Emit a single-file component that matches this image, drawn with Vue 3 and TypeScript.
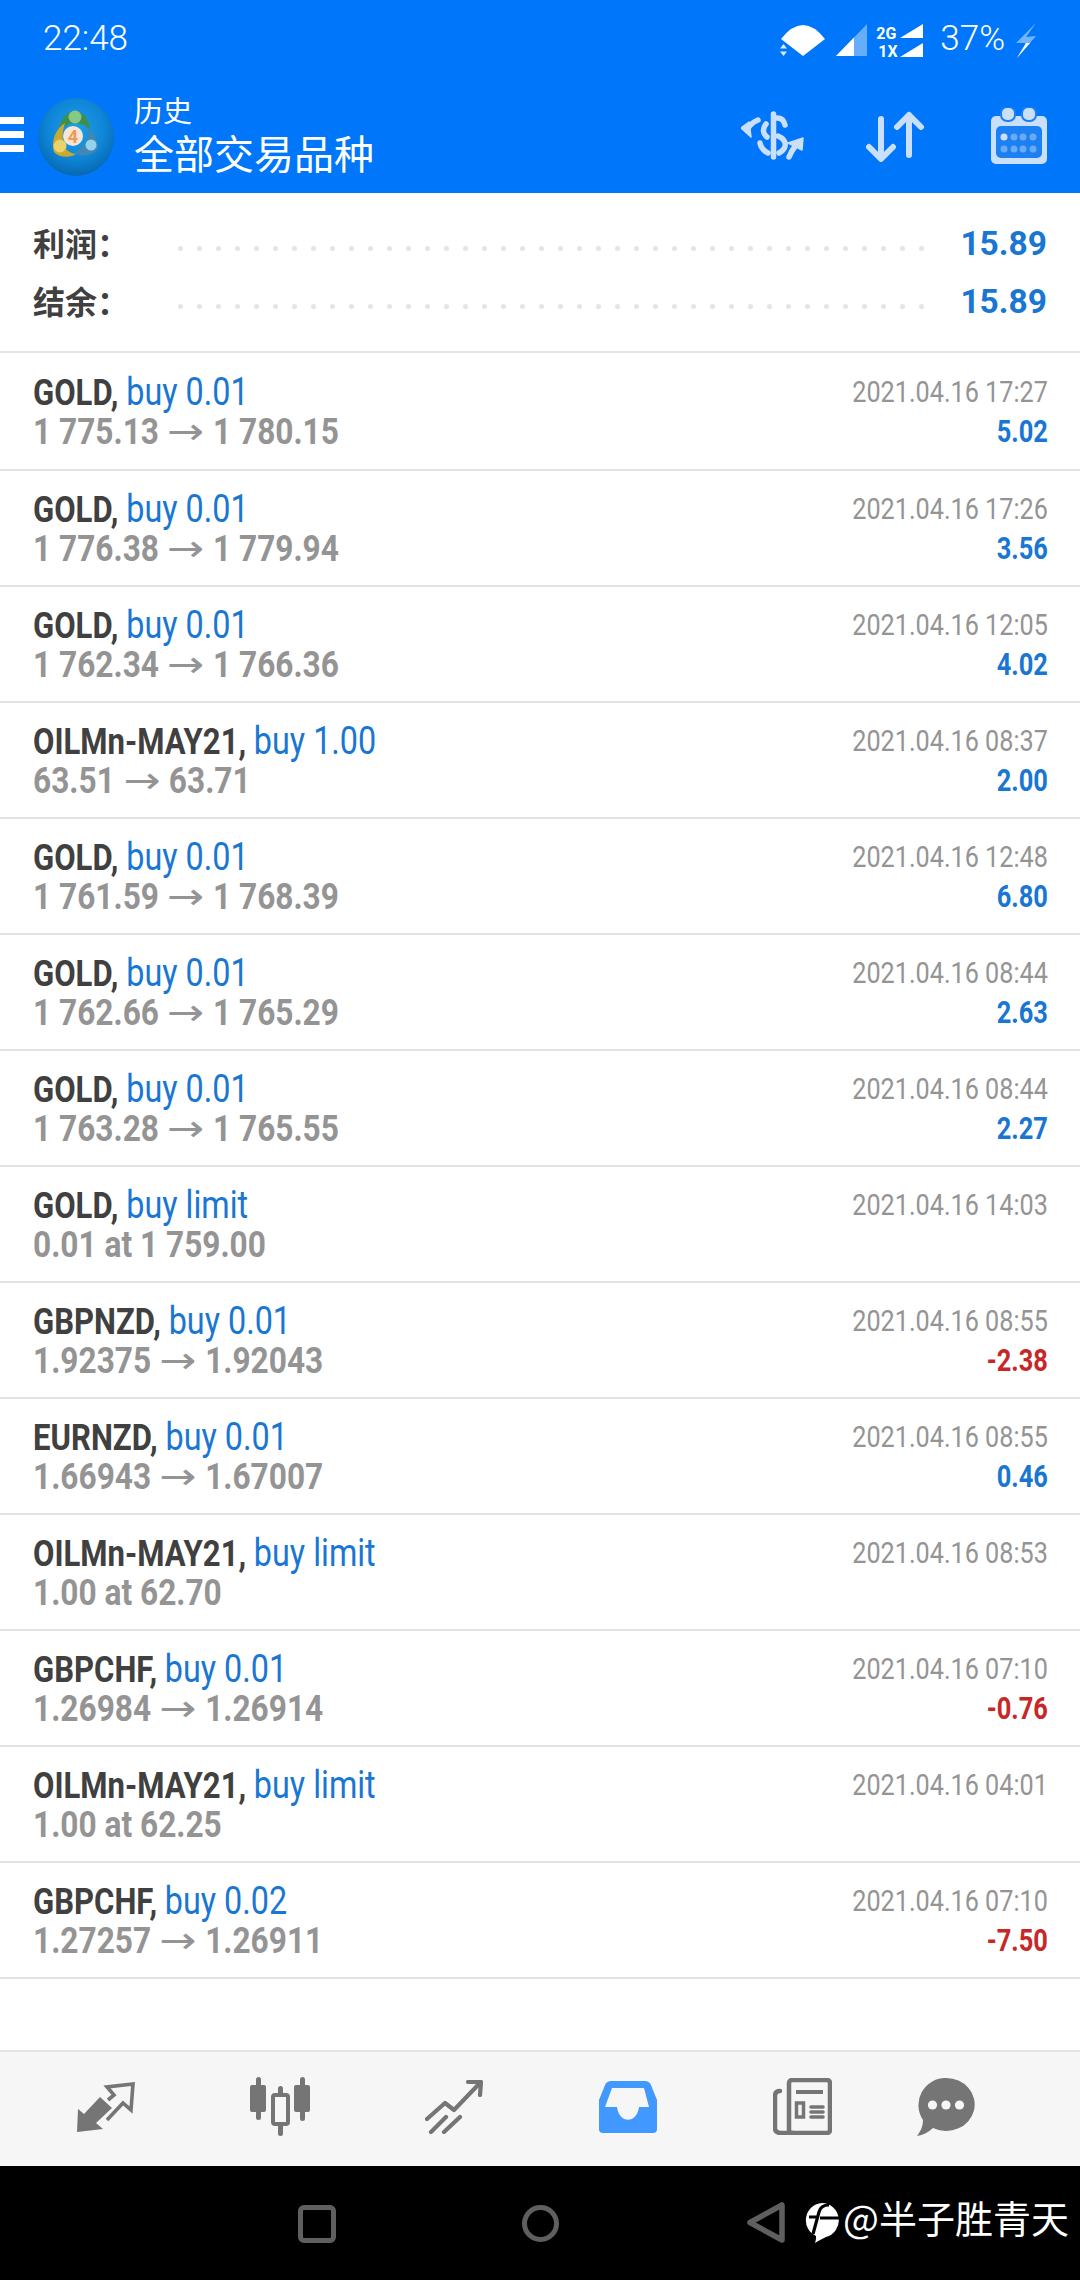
<script setup lang="ts">
interface Row { sym: string; act: string; sub: string; to?: string; date: string; val?: string; neg?: boolean }
const rows: Row[] = [
  { sym: 'GOLD', act: 'buy 0.01', sub: '1 775.13', to: '1 780.15', date: '2021.04.16 17:27', val: '5.02' },
  { sym: 'GOLD', act: 'buy 0.01', sub: '1 776.38', to: '1 779.94', date: '2021.04.16 17:26', val: '3.56' },
  { sym: 'GOLD', act: 'buy 0.01', sub: '1 762.34', to: '1 766.36', date: '2021.04.16 12:05', val: '4.02' },
  { sym: 'OILMn-MAY21', act: 'buy 1.00', sub: '63.51', to: '63.71', date: '2021.04.16 08:37', val: '2.00' },
  { sym: 'GOLD', act: 'buy 0.01', sub: '1 761.59', to: '1 768.39', date: '2021.04.16 12:48', val: '6.80' },
  { sym: 'GOLD', act: 'buy 0.01', sub: '1 762.66', to: '1 765.29', date: '2021.04.16 08:44', val: '2.63' },
  { sym: 'GOLD', act: 'buy 0.01', sub: '1 763.28', to: '1 765.55', date: '2021.04.16 08:44', val: '2.27' },
  { sym: 'GOLD', act: 'buy limit', sub: '0.01 at 1 759.00', date: '2021.04.16 14:03' },
  { sym: 'GBPNZD', act: 'buy 0.01', sub: '1.92375', to: '1.92043', date: '2021.04.16 08:55', val: '-2.38', neg: true },
  { sym: 'EURNZD', act: 'buy 0.01', sub: '1.66943', to: '1.67007', date: '2021.04.16 08:55', val: '0.46' },
  { sym: 'OILMn-MAY21', act: 'buy limit', sub: '1.00 at 62.70', date: '2021.04.16 08:53' },
  { sym: 'GBPCHF', act: 'buy 0.01', sub: '1.26984', to: '1.26914', date: '2021.04.16 07:10', val: '-0.76', neg: true },
  { sym: 'OILMn-MAY21', act: 'buy limit', sub: '1.00 at 62.25', date: '2021.04.16 04:01' },
  { sym: 'GBPCHF', act: 'buy 0.02', sub: '1.27257', to: '1.26911', date: '2021.04.16 07:10', val: '-7.50', neg: true },
]
const summary = [
  { label: '利润：', value: '15.89' },
  { label: '结余：', value: '15.89' },
]
const dots = 40
</script>

<template>
  <div class="app">
    <header class="head">
      <div class="status">
        <span class="time">22:48</span>
        <svg class="wifi" width="46" height="36" viewBox="780 23 46 36">
          <path d="M781 39 Q803 11 825 39 L803 56 Z" fill="#fff" />
          <path d="M783.5 44 L787 48.5 H780 Z M783.5 56 L787 51.5 H780 Z" fill="#fff" opacity=".85" />
        </svg>
        <svg class="sig" width="32" height="34" viewBox="836 23 32 34">
          <polygon points="836,56 867,24 867,56" fill="#fff" opacity=".4" />
          <polygon points="836,56 854,37.5 854,56" fill="#fff" />
        </svg>
        <div class="net">
          <span>2G</span>
          <span class="net-b">1X</span>
        </div>
        <svg class="tri" width="24" height="36" viewBox="900 23 24 36">
          <polygon points="900,38 923,24 923,38" fill="#fff" />
          <polygon points="900,57 923,43 923,57" fill="#fff" />
        </svg>
        <span class="batt">37%</span>
        <svg class="bolt" width="22" height="36" viewBox="1015 22 22 36">
          <polygon points="1036,23 1016,43 1026,43 1017,58 1036,36 1026,37" fill="#fff" opacity=".45" />
          <polygon points="1021,43 1026,43 1017,58 1030,43" fill="#fff" />
        </svg>
      </div>
      <div class="bar">
        <div class="burger"><i></i><i></i><i></i></div>
        <svg class="logo" width="76" height="78" viewBox="0 0 76 78">
          <defs>
            <radialGradient id="lg" cx="50%" cy="40%" r="62%">
              <stop offset="0" stop-color="#1f9fe6" />
              <stop offset=".6" stop-color="#0f86d8" />
              <stop offset="1" stop-color="#0566ae" />
            </radialGradient>
          </defs>
          <ellipse cx="38" cy="39" rx="38" ry="39" fill="url(#lg)" />
          <path d="M22 33 C21 22 28 14 37 13 C46 14 52 22 52 32 C47 26 41 25 36 25 C31 25 26 28 22 33 Z" fill="#3f8f4c" />
          <circle cx="37" cy="19" r="6.5" fill="#86c983" />
          <path d="M27 25 C17 31 13 44 16 54 C22 60 32 60 38 56 C30 55 26 50 25 44 C24 37 25 31 27 25 Z" fill="#c9a92e" />
          <circle cx="22" cy="48" r="6.5" fill="#ead36a" />
          <path d="M36 55 C44 59 56 58 60 50 C60 42 55 34 50 29 C51 38 49 46 36 55 Z" fill="#3f87b5" />
          <circle cx="53" cy="47" r="5.5" fill="#93d2ea" />
          <circle cx="35" cy="38" r="10" fill="#f5e6d6" />
          <text x="35" y="45" class="logo-t">4</text>
        </svg>
        <div class="titles">
          <div class="t1">历史</div>
          <div class="t2">全部交易品种</div>
        </div>
        <svg class="ic-dollar" width="64" height="50" viewBox="741 111 64 50" fill="none" stroke="#c9dffa" stroke-width="5.5" stroke-linecap="round">
          <path d="M773.5 114 V157" stroke-width="5.5" />
          <path d="M785 125 C784 120 781 118 777 118" />
          <path d="M766 124 C762 129 763 134 767 137" />
          <path d="M760 143 C761 148 764 151 768 153" />
          <path d="M778 136 C787 140 788 148 779 153" />
          <path d="M758 120 C753 122 749 126 747 130" />
          <path d="M789 157 C791 152 793 149 796 145" />
          <polygon points="741,128 749,122 751,137" fill="#c9dffa" stroke="#c9dffa" stroke-width="1.5" stroke-linejoin="round" />
          <polygon points="788,143 803,138 802,150" fill="#c9dffa" stroke="#c9dffa" stroke-width="1.5" stroke-linejoin="round" />
        </svg>
        <svg class="ic-sort" width="60" height="52" viewBox="865 110 60 52" fill="none" stroke="#c9dffa" stroke-width="6" stroke-linecap="round" stroke-linejoin="round">
          <path d="M881 119 V158 M869 147 L881 159 L893 147" />
          <path d="M909 155 V115 M897 127 L909 115 L921 127" />
        </svg>
        <svg class="ic-cal" width="56" height="58" viewBox="991 107 56 58">
          <rect x="991" y="116" width="56" height="48" rx="5" fill="#c9dffa" />
          <rect x="996" y="126" width="46" height="32" rx="5" fill="#1c80f2" />
          <rect x="1001" y="107" width="14" height="14" rx="6" fill="#c9dffa" stroke="#1c80f2" stroke-width="2" />
          <rect x="1022" y="107" width="14" height="14" rx="6" fill="#c9dffa" stroke="#1c80f2" stroke-width="2" />
          <circle cx="1004" cy="137" r="3.5" fill="#c9dffa" />
          <circle cx="1014" cy="137" r="3.5" fill="#6aa9f4" />
          <circle cx="1023" cy="137" r="3.5" fill="#6aa9f4" />
          <circle cx="1033" cy="137" r="3.5" fill="#6aa9f4" />
          <circle cx="1004" cy="149" r="3.5" fill="#6aa9f4" />
          <circle cx="1014" cy="149" r="3.5" fill="#6aa9f4" />
          <circle cx="1023" cy="149" r="3.5" fill="#6aa9f4" />
          <circle cx="1033" cy="149" r="3.5" fill="#6aa9f4" />
        </svg>
      </div>
    </header>

    <section class="summary">
      <div v-for="s in summary" :key="s.label" class="sum-row">
        <span class="sum-label">{{ s.label }}</span>
        <span class="sum-dots"><i v-for="n in dots" :key="n"></i></span>
        <span class="sum-val">{{ s.value }}</span>
      </div>
    </section>

    <main class="list">
      <div v-for="(r, i) in rows" :key="i" class="row">
        <div class="left">
          <div class="l1"><b>{{ r.sym }},</b> <span class="act">{{ r.act }}</span></div>
          <div class="l2">{{ r.sub }}<template v-if="r.to"> <span class="arrow">→</span> {{ r.to }}</template></div>
        </div>
        <div class="right">
          <div class="date">{{ r.date }}</div>
          <div v-if="r.val" class="val" :class="{ neg: r.neg }">{{ r.val }}</div>
        </div>
      </div>
    </main>

    <nav class="tabs">
      <svg width="58" height="50" viewBox="0 0 58 50" fill="none" stroke="#757575" stroke-width="3.6">
        <path d="M30 38 L46 21 L54 28 L56 2 L30 5 L37 13 L31 18" stroke-linejoin="miter" />
        <polygon points="0,50 1,27 7,32 23,15 35,26 19,41 26,47" fill="#757575" stroke="none" />
      </svg>
      <svg width="60" height="60" viewBox="0 0 60 60" fill="#757575">
        <rect x="0" y="8" width="16" height="27" rx="2" />
        <rect x="6" y="0" width="5" height="43" rx="2.5" />
        <rect x="44" y="8" width="16" height="27" rx="2" />
        <rect x="50" y="0" width="5" height="44" rx="2.5" />
        <rect x="28" y="9" width="5" height="50" rx="2.5" />
        <rect x="23" y="18" width="15" height="29" rx="2" fill="#f6f6f6" stroke="#757575" stroke-width="4" />
      </svg>
      <svg width="58" height="54" viewBox="0 0 58 54" fill="none" stroke="#757575" stroke-width="4.2" stroke-linecap="round" stroke-linejoin="round">
        <path d="M2 39 L20 23 L29 30 L53 5" />
        <path d="M43 2 H56 L55 15" />
        <path d="M6 52 L21 37 M19 52 L35 37" />
      </svg>
      <svg width="58" height="52" viewBox="0 0 58 52">
        <path d="M12 0 H46 Q50 0 52 4 L58 19 V48 Q58 52 54 52 H4 Q0 52 0 48 V19 L6 4 Q8 0 12 0 Z" fill="#4199ff" />
        <path d="M13 7 H45 L50 26 H40 C38 43 20 43 18 26 H6 Z" fill="#f6f6f6" />
      </svg>
      <svg width="59" height="57" viewBox="0 0 59 57" fill="none" stroke="#757575" stroke-width="4.5">
        <rect x="16" y="2" width="41" height="53" rx="3" />
        <path d="M7 13 Q2 13 2 18 V50 Q2 55 8 55 H20" stroke-linecap="round" />
        <path d="M23 14 H50" stroke-width="4" />
        <rect x="23.5" y="25" width="7" height="14" stroke-width="3.5" />
        <path d="M38 29 H50 M38 34 H50 M38 39 H50" stroke-width="3.6" stroke-linecap="round" />
      </svg>
      <svg width="58" height="58" viewBox="0 0 58 58">
        <path d="M29 0 A28.5 26.5 0 1 1 16 50 C12 54 6 57 0 58 C3 54 6 49 6 42 A27 27 0 0 1 29 0 Z" fill="#757575" />
        <circle cx="15.5" cy="27" r="4.6" fill="#f6f6f6" />
        <circle cx="29" cy="27" r="4.6" fill="#f6f6f6" />
        <circle cx="42.5" cy="27" r="4.6" fill="#f6f6f6" />
      </svg>
    </nav>

    <footer class="nav">
      <span class="n-square"></span>
      <span class="n-circle"></span>
      <svg class="n-back" width="38" height="42" viewBox="0 0 38 42" fill="none" stroke="#5f5f5f" stroke-width="5.5" stroke-linejoin="round">
        <polygon points="35,3 35,38 3,20.5" />
      </svg>
      <svg class="n-mark" width="36" height="42" viewBox="0 0 36 42">
        <path d="M18 1 A17.3 17.3 0 0 1 22 35 C18 37 14 39 11 41 C12 38 12 36 12 34 A17.3 17.3 0 0 1 18 1 Z" fill="#fff" />
        <path d="M25 3 C19 3 16 6 15 10 L9 32 M5 15 H14 M16 16 H36" fill="none" stroke="#000" stroke-width="3.2" />
      </svg>
      <span class="n-text">@半子胜青天</span>
    </footer>
  </div>
</template>

<style>
html, body { margin: 0; background: #fff; }
</style>

<style scoped>
.app {
  width: 1080px;
  height: 2280px;
  display: flex;
  flex-direction: column;
  overflow: hidden;
  font-family: Roboto, "Noto Sans CJK SC", sans-serif;
  background: #fff;
}
.head { height: 193px; background: #0077fb; color: #fff; flex: none; }
.status { height: 78px; display: flex; align-items: flex-start; padding-left: 43px; box-sizing: border-box; }
.status svg { flex: none; }
.time { font-size: 35px; font-weight: 300; line-height: 38px; margin-top: 20px; color: #fff; }
.wifi { margin: 23px 0 0 auto; }
.sig { margin: 23px 0 0 10px; }
.net { margin: 25px 0 0 8px; width: 24px; display: flex; flex-direction: column; align-items: flex-start; font-size: 16px; font-weight: 700; line-height: 18px; }
.net-b { margin-left: 2px; }
.tri { margin: 23px 0 0 0; }
.batt { font-size: 35px; font-weight: 300; line-height: 38px; margin: 20px 0 0 16px; }
.bolt { margin: 22px 43px 0 10px; }

.bar { height: 115px; display: flex; align-items: center; position: relative; }
.burger { width: 24px; display: flex; flex-direction: column; gap: 7px; margin-top: -2px; }
.burger i { display: block; height: 7px; background: #fff; }
.logo { margin: 3px 0 0 14px; flex: none; }
.logo-t { font: 700 18px Roboto, sans-serif; fill: #ef9a55; text-anchor: middle; }
.titles { margin-left: 20px; margin-top: -8px; flex: 1; }
.t1 { font-family: "Noto Sans CJK SC", sans-serif; font-size: 29px; line-height: 40px; font-weight: 400; }
.t2 { font-family: "Noto Sans CJK SC", sans-serif; font-size: 40px; line-height: 46px; font-weight: 400; }
.ic-dollar { flex: none; }
.ic-sort { margin-left: 60px; flex: none; }
.ic-cal { margin: 0 33px 0 66px; flex: none; }

.summary {
  flex: none;
  height: 160px;
  padding-top: 20px;
  box-sizing: border-box;
  border-bottom: 2px solid #e3e3e3;
}
.sum-row { height: 58px; display: flex; align-items: center; padding: 0 33px; }
.sum-label { font-weight: 700; font-size: 32px; color: #404040; width: 145px; flex: none; font-family: "Noto Sans CJK SC", sans-serif; }
.sum-dots { display: flex; gap: 14px; flex: 1; margin-top: 12px; }
.sum-dots i { width: 5px; height: 5px; border-radius: 50%; background: #e4e4e4; }
.sum-val { font-weight: 700; font-size: 33.5px; color: #1976d2; margin-top: 2px; }

.list { flex: 1; }
.row {
  height: 116px;
  box-sizing: border-box;
  border-bottom: 2px solid #e3e3e3;
  display: flex;
  justify-content: space-between;
  padding: 18px 32px 0 33px;
}
.row:first-child { height: 118px; padding-top: 19px; }
.left, .right { white-space: nowrap; }
.l1 { font-size: 37px; line-height: 40px; height: 40px; transform: scaleX(.84); transform-origin: left; color: #1976d2; }
.l1 b { color: #404040; font-weight: 700; }
.act { font-size: 38.5px; }
.l2 { font-size: 37px; line-height: 40px; height: 40px; font-weight: 700; color: #949494; transform: scaleX(.855); transform-origin: left; }
.arrow { display: inline-block; font-family: "DejaVu Sans", sans-serif; font-size: 37px; font-weight: 400; line-height: 36px; margin: 0 7px 0 16px; transform: scaleX(1.4); }
.right { text-align: right; }
.date { font-size: 30px; line-height: 40px; color: #949494; transform: scaleX(.84); transform-origin: right; }
.val { font-size: 31px; font-weight: 700; line-height: 40px; color: #1976d2; transform: scaleX(.82); transform-origin: right; }
.val.neg { color: #c62828; }

.tabs {
  flex: none;
  height: 116px;
  box-sizing: border-box;
  background: #f6f6f6;
  border-top: 2px solid #e3e3e3;
  padding: 0 0 5px 19px;
  display: grid;
  grid-template-columns: repeat(5, 174px) 114px;
  justify-items: center;
  align-items: center;
}
.nav { flex: none; height: 114px; background: #000; position: relative; display: flex; align-items: center; }
.n-square { width: 28px; height: 28px; border: 5px solid #5f5f5f; border-radius: 6px; margin: 0 0 -1px 298px; flex: none; }
.n-circle { width: 27px; height: 27px; border: 5px solid #5f5f5f; border-radius: 50%; margin: 0 0 -1px 186px; flex: none; }
.n-back { margin: 0 0 0 188px; flex: none; }
.n-mark { margin: 0 0 0 19px; flex: none; }
.n-text { color: #fff; font-family: "Noto Sans CJK SC", sans-serif; font-size: 38px; line-height: 44px; margin: -12px 0 0 3px; font-weight: 400; white-space: nowrap; }
</style>
